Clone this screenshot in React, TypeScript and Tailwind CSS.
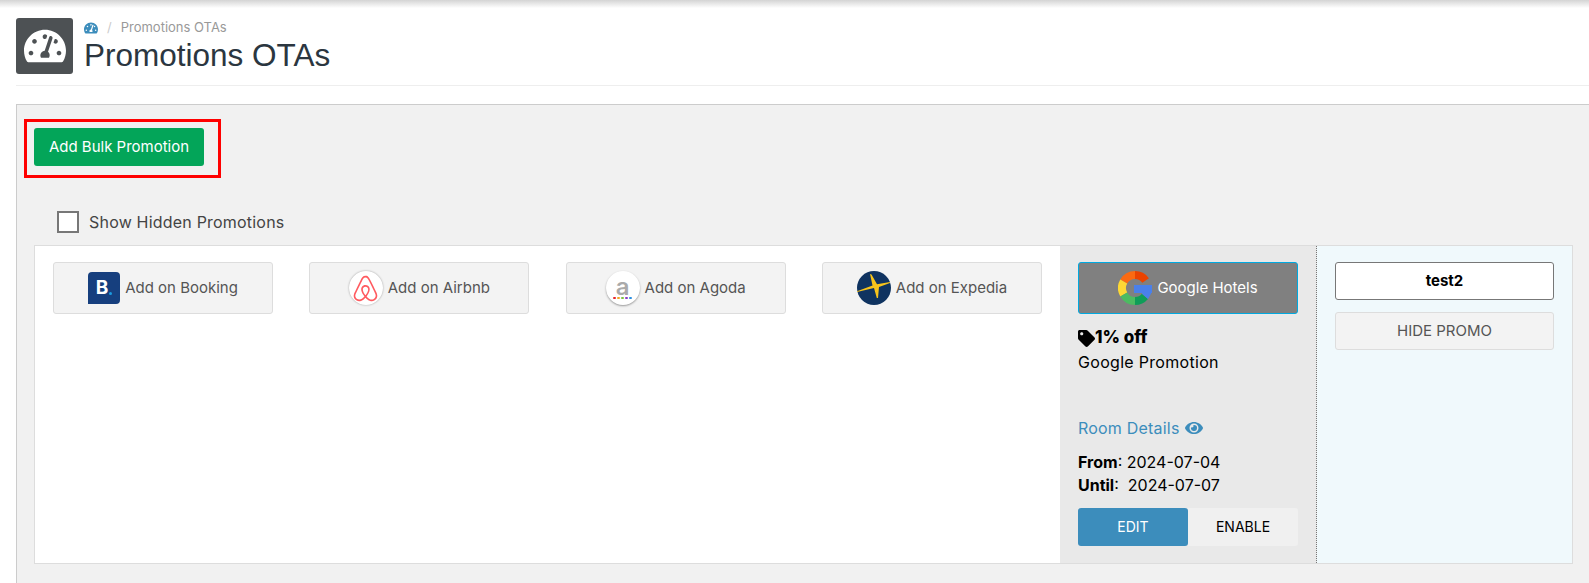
import { FaAirbnb, FaEye, FaTachometerAlt, FaTag } from "react-icons/fa";

function BookingLogo() {
  return (
    <span className="flex h-8 w-8 shrink-0 items-center justify-center gap-px rounded-[4px] rounded-bl-none bg-[#163f7e] text-[19px] font-bold text-white">
      B<span className="mt-[11px] h-[3px] w-[3px] rounded-full bg-[#1a9be0]" />
    </span>
  );
}

function AirbnbLogo() {
  return (
    <span className="flex h-[34px] w-[34px] shrink-0 items-center justify-center rounded-full bg-white shadow-[0_0_2px_#999] text-[#ff5a5f]">
      <FaAirbnb size={29} />
    </span>
  );
}

function AgodaLogo() {
  const dots = ["bg-[#e8262a]", "bg-[#f5a623]", "bg-[#7ec242]", "bg-[#8a3fc7]", "bg-[#2d8fe0]"];
  return (
    <span className="flex h-[34px] w-[34px] shrink-0 flex-col items-center justify-center rounded-full bg-white shadow-[0_1px_2px_#999]">
      <span className="text-[24px] leading-[19px] font-semibold text-[#aaaaaa]">a</span>
      <span className="mt-px flex gap-[1.5px]">
        {dots.map((dot) => (
          <span key={dot} className={`h-[2.5px] w-[2.5px] rounded-full ${dot}`} />
        ))}
      </span>
    </span>
  );
}

function ExpediaLogo() {
  return (
    <svg viewBox="0 0 34 34" className="h-[34px] w-[34px] shrink-0">
      <circle cx="17" cy="17" r="17" fill="#0f3360" />
      <polygon
        fill="#f7c31b"
        points="0,20.2 15.5,14.5 13,3 14.5,3.5 20,13.2 33,11 33,12 22,16 21,27 19.8,27 17,17 0,20.9"
      />
    </svg>
  );
}

function GoogleLogo() {
  return (
    <svg viewBox="0 0 34 34" className="h-[34px] w-[34px] shrink-0" fill="none" strokeWidth="8">
      <path d="M17 4A13 13 0 0 1 27.65 9.54" stroke="#ea4300" />
      <path d="M5.74 10.5A13 13 0 0 1 17 4" stroke="#fb6a12" />
      <path d="M5.74 23.5A13 13 0 0 1 5.74 10.5" stroke="#fdd835" />
      <path d="M17 30A13 13 0 0 1 5.74 23.5" stroke="#4cbb61" />
      <path d="M26.96 25.36A13 13 0 0 1 17 30" stroke="#0f9d58" />
      <path d="M30 18A13 13 0 0 1 26.96 25.36" stroke="#4a80ea" />
      <rect x="16" y="14" width="18" height="8" fill="#4a80ea" stroke="none" />
    </svg>
  );
}

function AddButton({ logo, label }: { logo: React.ReactNode; label: string }) {
  return (
    <button className="flex h-[52px] w-[220px] items-center justify-center gap-[5px] rounded-[3px] border border-[#dddddd] bg-[#f3f3f3] text-[15px] text-[#555555]">
      {logo}
      {label}
    </button>
  );
}

export default function App() {
  return (
    <div className="h-[583px] w-full overflow-hidden bg-white font-[Inter,sans-serif]">
      <div className="h-2 bg-gradient-to-b from-[#d4d4d4] to-white" />
      <div className="ml-4 flex gap-[11px] border-b border-[#eeeeee] pt-[10px] pb-[11px]">
        <div className="flex h-14 w-[57px] items-center justify-center rounded-[3px] bg-[#4d5154] text-white">
          <FaTachometerAlt size={42} />
        </div>
        <div>
          <div className="flex h-5 items-center text-[13px] text-[#999999]">
            <FaTachometerAlt size={14} className="text-[#3c8dbc]" />
            <span className="mx-[9px] text-[#cccccc]">/</span>
            Promotions OTAs
          </div>
          <h1 className="-mt-px font-['Liberation_Sans',sans-serif] text-[31.5px] leading-9 text-[#2b3640]">
            Promotions OTAs
          </h1>
        </div>
      </div>

      <div className="mt-[18px] ml-4 w-[1600px] border-t border-l border-[#cccccc] bg-[#f1f1f1] pt-[14px] pb-6">
        <div className="ml-[7px] w-[197px] border-[3px] border-[#ff0000] px-[7px] pt-[6px] pb-[9px]">
          <button className="flex h-[38px] w-[170px] items-center justify-center rounded-[3px] bg-[#03a559] text-[15px] text-white">
            Add Bulk Promotion
          </button>
        </div>

        <label className="mt-[33px] ml-10 flex h-[22px] items-center gap-[10px] text-base tracking-[0.2px] text-[#444444]">
          <span className="h-[22px] w-[22px] border-2 border-[#777777] bg-white" />
          Show Hidden Promotions
        </label>

        <div className="mt-3 ml-[17px] flex h-[319px] w-[1539px] border border-[#dddddd] bg-white text-sm">
          <div className="flex flex-1 gap-[36.33px] pt-4 pl-[18px]">
            <AddButton logo={<BookingLogo />} label="Add on Booking" />
            <AddButton logo={<AirbnbLogo />} label="Add on Airbnb" />
            <AddButton logo={<AgodaLogo />} label="Add on Agoda" />
            <AddButton logo={<ExpediaLogo />} label="Add on Expedia" />
          </div>

          <div className="flex w-[257px] flex-col border-r border-dotted border-[#777777] bg-[#e9e9e9] px-[18px] pt-4 text-base text-black">
            <button className="flex h-[52px] w-[220px] items-center justify-center gap-[5px] rounded-[3px] border border-[#00a9e0] bg-[#808080] text-[15px] text-white">
              <GoogleLogo />
              Google Hotels
            </button>
            <div className="mt-3 flex h-6 items-center text-[17px] font-extrabold">
              <FaTag size={17} />
              1% off
            </div>
            <div className="h-6 leading-6 tracking-[0.3px]">Google Promotion</div>
            <div className="mt-[44px] flex h-5 items-center gap-[5px] tracking-[0.2px] text-[#3c8dbc]">
              Room Details
              <FaEye size={18} />
            </div>
            <div className="mt-[13px] h-[23px] leading-[23px]">
              <b>From</b>: 2024-07-04
            </div>
            <div className="h-[23px] leading-[23px]">
              <b>Until</b>: &nbsp;2024-07-07
            </div>
            <div className="mt-[11px] flex h-[38px] w-[220px] text-sm">
              <button className="w-[110px] rounded-[3px] bg-[#3c8dbc] text-white">EDIT</button>
              <button className="w-[110px] rounded-r-[3px] bg-[#f0f0f0]">ENABLE</button>
            </div>
          </div>

          <div className="flex w-[255px] flex-col gap-3 bg-[#f0f9fc] px-[18px] pt-4 text-[15px]">
            <div className="flex h-[38px] w-[219px] items-center justify-center rounded-[3px] border border-[#777777] bg-white font-bold text-black">
              test2
            </div>
            <button className="h-[38px] w-[219px] rounded-[3px] border border-[#dddddd] bg-[#f3f3f3] text-[#555555]">
              HIDE PROMO
            </button>
          </div>
        </div>
      </div>
    </div>
  );
}
